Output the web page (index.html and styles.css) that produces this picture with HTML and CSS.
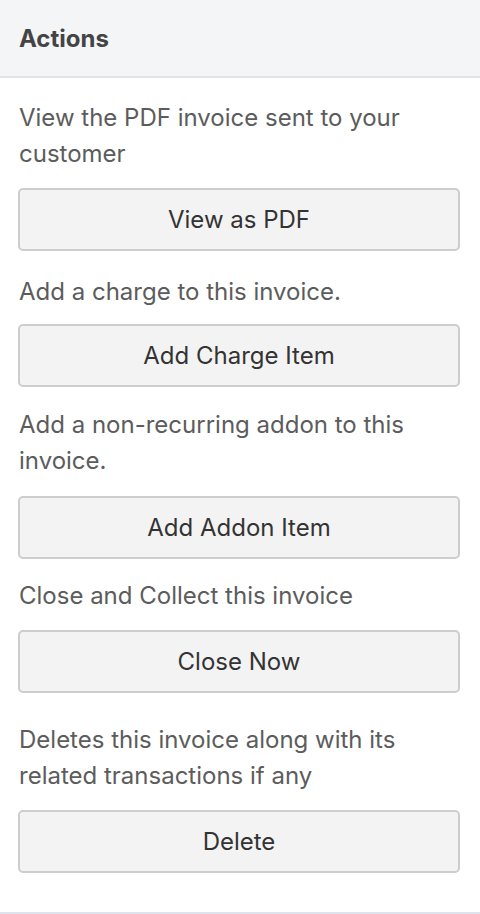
FILE: index.html
```html
<!DOCTYPE html>
<html>
<head>
<meta charset="utf-8">
<link rel="stylesheet" href="styles.css">
</head>
<body>
<div class="panel">
  <div class="panel-header">Actions</div>
  <div class="panel-body">
    <div class="action">
      <p class="desc">View the PDF invoice sent to your customer</p>
      <button class="btn">View as PDF</button>
    </div>
    <div class="action">
      <p class="desc">Add a charge to this invoice.</p>
      <button class="btn">Add Charge Item</button>
    </div>
    <div class="action">
      <p class="desc">Add a non-recurring addon to this invoice.</p>
      <button class="btn">Add Addon Item</button>
    </div>
    <div class="action">
      <p class="desc">Close and Collect this invoice</p>
      <button class="btn">Close Now</button>
    </div>
    <div class="action">
      <p class="desc">Deletes this invoice along with its related transactions if any</p>
      <button class="btn">Delete</button>
    </div>
  </div>
</div>
</body>
</html>
```

FILE: styles.css
```css
* { box-sizing: border-box; }
html, body { margin: 0; padding: 0; background: #fff; }
body { font-family: Inter, "Liberation Sans", sans-serif; }
.panel {
  width: 480px;
  height: 914px;
  border-bottom: 2px solid #dfe3ec;
}
.panel-header {
  height: 78px;
  background: #f4f5f7;
  border-bottom: 2px solid #dfe3ea;
  padding: 22px 19px 0;
  font-size: 24px;
  font-weight: 700;
  color: #444;
  line-height: 34px;
}
.panel-body {
  padding: 0 20px 0 18px;
}
.action { display: flex; flex-direction: column; }
.desc {
  margin: 22px 0 16px 1px;
  font-size: 24px;
  line-height: 36px;
  color: #5c5c5c;
}
.action:nth-child(2) .desc { margin-top: 23px; margin-bottom: 14px; }
.action:nth-child(3) .desc { margin-top: 20px; margin-bottom: 17px; }
.action:nth-child(4) .desc { margin-top: 19px; }
.action:nth-child(5) .desc { margin-top: 29px; }
.btn {
  height: 63px;
  width: 100%;
  background: #f3f3f3;
  border: 2px solid #cdcdcd;
  border-radius: 5px;
  font-family: inherit;
  font-size: 24px;
  color: #333;
  padding: 0;
}
```
